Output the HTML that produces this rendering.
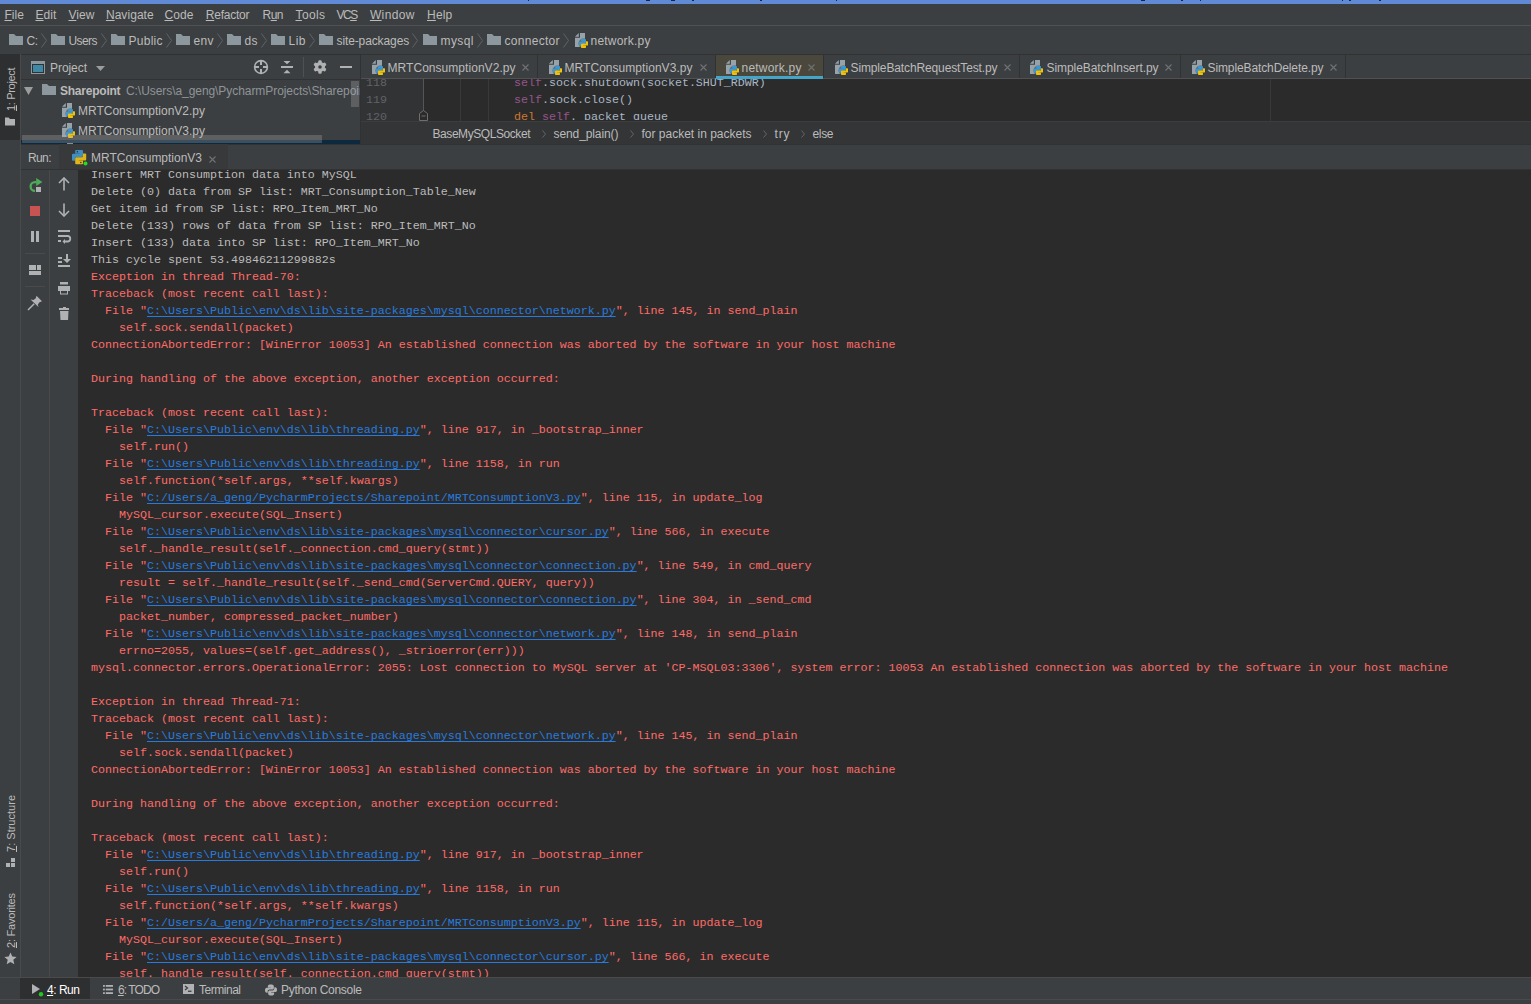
<!DOCTYPE html>
<html><head><meta charset="utf-8"><style>
html,body{margin:0;padding:0;width:1531px;height:1004px;overflow:hidden;background:#3C3F41}
.t{position:absolute;font-family:"Liberation Sans", sans-serif;line-height:16px;white-space:pre}
.t u{text-decoration:underline;text-underline-offset:1px}
.m{position:absolute;font-family:"Liberation Mono", monospace;font-size:11.665px;line-height:17px;white-space:pre}
.con{font-family:"Liberation Mono", monospace;font-size:11.665px;line-height:17px;white-space:pre}
.lk{color:#287BDE;text-decoration:underline;text-underline-offset:2px}
</style></head><body>
<div style="position:absolute;left:0px;top:0px;width:1531px;height:4px;background:#6089D6;"></div>
<div style="position:absolute;left:528px;top:0px;width:1px;height:1px;background:#1A2440;"></div>
<div style="position:absolute;left:646px;top:0px;width:4px;height:1px;background:#1A2440;"></div>
<div style="position:absolute;left:671px;top:0px;width:4px;height:1px;background:#1A2440;"></div>
<div style="position:absolute;left:692px;top:0px;width:2px;height:1px;background:#1A2440;"></div>
<div style="position:absolute;left:760px;top:0px;width:2px;height:1px;background:#1A2440;"></div>
<div style="position:absolute;left:836px;top:0px;width:1px;height:1px;background:#1A2440;"></div>
<div style="position:absolute;left:1141px;top:0px;width:4px;height:1px;background:#1A2440;"></div>
<div style="position:absolute;left:1181px;top:0px;width:2px;height:1px;background:#1A2440;"></div>
<div style="position:absolute;left:1200px;top:0px;width:1px;height:1px;background:#1A2440;"></div>
<div style="position:absolute;left:1342px;top:0px;width:1px;height:1px;background:#1A2440;"></div>
<div style="position:absolute;left:1349px;top:0px;width:2px;height:1px;background:#1A2440;"></div>
<div style="position:absolute;left:1379px;top:0px;width:2px;height:1px;background:#1A2440;"></div>
<div style="position:absolute;left:0px;top:4px;width:1531px;height:21px;background:#3C3F41;"></div>
<div style="position:absolute;left:0px;top:25px;width:1531px;height:1px;background:#515151;"></div>
<div class="t" style="left:4.5px;top:7.0px;font-size:12px;color:#BBBBBB;font-weight:400;letter-spacing:-0.015px;"><u>F</u>ile</div>
<div class="t" style="left:35.5px;top:7.0px;font-size:12px;color:#BBBBBB;font-weight:400;letter-spacing:0.071px;"><u>E</u>dit</div>
<div class="t" style="left:68.5px;top:7.0px;font-size:12px;color:#BBBBBB;font-weight:400;letter-spacing:0.034px;"><u>V</u>iew</div>
<div class="t" style="left:105.9px;top:7.0px;font-size:12px;color:#BBBBBB;font-weight:400;letter-spacing:0.061px;"><u>N</u>avigate</div>
<div class="t" style="left:164.5px;top:7.0px;font-size:12px;color:#BBBBBB;font-weight:400;letter-spacing:0.104px;"><u>C</u>ode</div>
<div class="t" style="left:205.8px;top:7.0px;font-size:12px;color:#BBBBBB;font-weight:400;letter-spacing:-0.237px;"><u>R</u>efactor</div>
<div class="t" style="left:262.5px;top:7.0px;font-size:12px;color:#BBBBBB;font-weight:400;letter-spacing:-0.508px;">R<u>u</u>n</div>
<div class="t" style="left:295.5px;top:7.0px;font-size:12px;color:#BBBBBB;font-weight:400;letter-spacing:0.371px;"><u>T</u>ools</div>
<div class="t" style="left:336.5px;top:7.0px;font-size:12px;color:#BBBBBB;font-weight:400;letter-spacing:-1.494px;">VC<u>S</u></div>
<div class="t" style="left:369.9px;top:7.0px;font-size:12px;color:#BBBBBB;font-weight:400;letter-spacing:0.383px;"><u>W</u>indow</div>
<div class="t" style="left:427.0px;top:7.0px;font-size:12px;color:#BBBBBB;font-weight:400;letter-spacing:0.204px;"><u>H</u>elp</div>
<div style="position:absolute;left:0px;top:26px;width:1531px;height:28px;background:#3C3F41;"></div>
<svg style="position:absolute;left:9px;top:34px" width="14" height="11" viewBox="0 0 14 11">
<path d="M0 0 H5 L7 2 H14 V11 H0 Z" fill="#8C979E"/></svg>
<div class="t" style="left:26.5px;top:33.0px;font-size:12px;color:#BBBBBB;font-weight:400;letter-spacing:-0.5px;">C:</div>
<svg style="position:absolute;left:41px;top:33px" width="6" height="15" viewBox="0 0 6 15">
<path d="M0.5 0.5 L5.5 7.5 L0.5 14.5" fill="none" stroke="#5E6366" stroke-width="1"/></svg>
<svg style="position:absolute;left:51px;top:34px" width="14" height="11" viewBox="0 0 14 11">
<path d="M0 0 H5 L7 2 H14 V11 H0 Z" fill="#8C979E"/></svg>
<div class="t" style="left:68.5px;top:33.0px;font-size:12px;color:#BBBBBB;font-weight:400;letter-spacing:-0.586px;">Users</div>
<svg style="position:absolute;left:101px;top:33px" width="6" height="15" viewBox="0 0 6 15">
<path d="M0.5 0.5 L5.5 7.5 L0.5 14.5" fill="none" stroke="#5E6366" stroke-width="1"/></svg>
<svg style="position:absolute;left:111px;top:34px" width="14" height="11" viewBox="0 0 14 11">
<path d="M0 0 H5 L7 2 H14 V11 H0 Z" fill="#8C979E"/></svg>
<div class="t" style="left:128.5px;top:33.0px;font-size:12px;color:#BBBBBB;font-weight:400;letter-spacing:0.263px;">Public</div>
<svg style="position:absolute;left:166px;top:33px" width="6" height="15" viewBox="0 0 6 15">
<path d="M0.5 0.5 L5.5 7.5 L0.5 14.5" fill="none" stroke="#5E6366" stroke-width="1"/></svg>
<svg style="position:absolute;left:176px;top:34px" width="14" height="11" viewBox="0 0 14 11">
<path d="M0 0 H5 L7 2 H14 V11 H0 Z" fill="#8C979E"/></svg>
<div class="t" style="left:193.5px;top:33.0px;font-size:12px;color:#BBBBBB;font-weight:400;letter-spacing:0.32px;">env</div>
<svg style="position:absolute;left:217px;top:33px" width="6" height="15" viewBox="0 0 6 15">
<path d="M0.5 0.5 L5.5 7.5 L0.5 14.5" fill="none" stroke="#5E6366" stroke-width="1"/></svg>
<svg style="position:absolute;left:227px;top:34px" width="14" height="11" viewBox="0 0 14 11">
<path d="M0 0 H5 L7 2 H14 V11 H0 Z" fill="#8C979E"/></svg>
<div class="t" style="left:244.5px;top:33.0px;font-size:12px;color:#BBBBBB;font-weight:400;letter-spacing:0.312px;">ds</div>
<svg style="position:absolute;left:261px;top:33px" width="6" height="15" viewBox="0 0 6 15">
<path d="M0.5 0.5 L5.5 7.5 L0.5 14.5" fill="none" stroke="#5E6366" stroke-width="1"/></svg>
<svg style="position:absolute;left:271px;top:34px" width="14" height="11" viewBox="0 0 14 11">
<path d="M0 0 H5 L7 2 H14 V11 H0 Z" fill="#8C979E"/></svg>
<div class="t" style="left:288.5px;top:33.0px;font-size:12px;color:#BBBBBB;font-weight:400;letter-spacing:0.492px;">Lib</div>
<svg style="position:absolute;left:309px;top:33px" width="6" height="15" viewBox="0 0 6 15">
<path d="M0.5 0.5 L5.5 7.5 L0.5 14.5" fill="none" stroke="#5E6366" stroke-width="1"/></svg>
<svg style="position:absolute;left:319px;top:34px" width="14" height="11" viewBox="0 0 14 11">
<path d="M0 0 H5 L7 2 H14 V11 H0 Z" fill="#8C979E"/></svg>
<div class="t" style="left:336.5px;top:33.0px;font-size:12px;color:#BBBBBB;font-weight:400;letter-spacing:-0.112px;">site-packages</div>
<svg style="position:absolute;left:412px;top:33px" width="6" height="15" viewBox="0 0 6 15">
<path d="M0.5 0.5 L5.5 7.5 L0.5 14.5" fill="none" stroke="#5E6366" stroke-width="1"/></svg>
<svg style="position:absolute;left:423px;top:34px" width="14" height="11" viewBox="0 0 14 11">
<path d="M0 0 H5 L7 2 H14 V11 H0 Z" fill="#8C979E"/></svg>
<div class="t" style="left:440.5px;top:33.0px;font-size:12px;color:#BBBBBB;font-weight:400;letter-spacing:0.414px;">mysql</div>
<svg style="position:absolute;left:477px;top:33px" width="6" height="15" viewBox="0 0 6 15">
<path d="M0.5 0.5 L5.5 7.5 L0.5 14.5" fill="none" stroke="#5E6366" stroke-width="1"/></svg>
<svg style="position:absolute;left:487px;top:34px" width="14" height="11" viewBox="0 0 14 11">
<path d="M0 0 H5 L7 2 H14 V11 H0 Z" fill="#8C979E"/></svg>
<div class="t" style="left:504.5px;top:33.0px;font-size:12px;color:#BBBBBB;font-weight:400;letter-spacing:0.287px;">connector</div>
<svg style="position:absolute;left:563px;top:33px" width="6" height="15" viewBox="0 0 6 15">
<path d="M0.5 0.5 L5.5 7.5 L0.5 14.5" fill="none" stroke="#5E6366" stroke-width="1"/></svg>
<svg style="position:absolute;left:575px;top:33px" width="14" height="16" viewBox="0 0 14 16">
<path d="M0 3.7 L3.8 0 V3.7 Z" fill="#97A3AB"/>
<path d="M5 0 H10 V14 H0 V4.8 H5 Z" fill="#97A3AB"/>
<circle cx="8.5" cy="10.5" r="5" fill="#333537" opacity="0.55"/>
<g transform="translate(4 6) scale(0.6338028169014085)"><path d="M4 0 H10 Q11 0 11 1 V6 Q11 7 10 7 H4.2 Q3.2 7 3.2 8 V10.7 H1 Q0 10.7 0 9.7 V4.8 Q0 3.8 1 3.8 H7.5 V3.4 H3.2 V1 Q3.2 0 4 0 Z" fill="#3D97D3"/><g transform="rotate(180 7.1 7.1)"><path d="M4 0 H10 Q11 0 11 1 V6 Q11 7 10 7 H4.2 Q3.2 7 3.2 8 V10.7 H1 Q0 10.7 0 9.7 V4.8 Q0 3.8 1 3.8 H7.5 V3.4 H3.2 V1 Q3.2 0 4 0 Z" fill="#F0C20A"/></g></g>
</svg>
<div class="t" style="left:590.5px;top:33.0px;font-size:12px;color:#BBBBBB;font-weight:400;letter-spacing:0.219px;">network.py</div>
<div style="position:absolute;left:0px;top:54px;width:20px;height:923px;background:#3C3F41;"></div>
<div style="position:absolute;left:0px;top:54px;width:20px;height:86px;background:#2D2F30;"></div>
<div style="position:absolute;left:20px;top:54px;width:1px;height:923px;background:#4A4A4A;"></div>
<div style="position:absolute;left:21px;top:54px;width:339px;height:90px;background:#3C3F41;"></div>
<div style="position:absolute;left:21px;top:79px;width:339px;height:1px;background:#323232;"></div>
<div style="position:absolute;left:21px;top:54px;width:1510px;height:1px;background:#2F3133;"></div>
<svg style="position:absolute;left:31px;top:61px" width="14" height="13" viewBox="0 0 14 13"><rect x="0" y="0" width="14" height="13" fill="#8C979E"/><rect x="1" y="3" width="12" height="9" fill="#2F3133"/><rect x="2" y="4" width="10" height="7" fill="#3E89A6"/></svg>
<div class="t" style="left:50px;top:60.0px;font-size:12px;color:#BBBBBB;font-weight:400;letter-spacing:-0.06px;">Project</div>
<svg style="position:absolute;left:96px;top:66px" width="9" height="5" viewBox="0 0 9 5"><path d="M0 0 H9 L4.5 5 Z" fill="#9A9C9E"/></svg>
<svg style="position:absolute;left:253px;top:59px" width="16" height="16" viewBox="0 0 16 16"><circle cx="8" cy="8" r="6.4" fill="none" stroke="#AFB1B3" stroke-width="1.6"/><path d="M8 1.5 V6 M8 10 V14.5 M1.5 8 H6 M10 8 H14.5" stroke="#AFB1B3" stroke-width="2"/></svg>
<svg style="position:absolute;left:281px;top:60px" width="12" height="14" viewBox="0 0 12 14"><path d="M0 7 H12" stroke="#AFB1B3" stroke-width="2"/><path d="M2.5 1 H9.5 L6 4.2 Z M2.5 13.2 H9.5 L6 9.8 Z" fill="#AFB1B3"/></svg>
<div style="position:absolute;left:303px;top:57px;width:1px;height:20px;background:#4F5052;"></div>
<svg style="position:absolute;left:313px;top:60px" width="14" height="14" viewBox="0 0 14 14"><g fill="#AFB1B3"><circle cx="7" cy="7" r="5"/><rect x="5.3" y="0.3" width="3.4" height="13.4" rx="1.2"/><rect x="5.3" y="0.3" width="3.4" height="13.4" rx="1.2" transform="rotate(60 7 7)"/><rect x="5.3" y="0.3" width="3.4" height="13.4" rx="1.2" transform="rotate(-60 7 7)"/></g><circle cx="7" cy="7" r="1.8" fill="#3C3F41"/></svg>
<div style="position:absolute;left:340px;top:66px;width:12px;height:2px;background:#AFB1B3;"></div>
<svg style="position:absolute;left:24px;top:87px" width="9" height="8" viewBox="0 0 9 8"><path d="M0 0 H9 L4.5 8 Z" fill="#9A9C9E"/></svg>
<svg style="position:absolute;left:42px;top:84px" width="14" height="11" viewBox="0 0 14 11">
<path d="M0 0 H5 L7 2 H14 V11 H0 Z" fill="#8C979E"/></svg>
<div class="t" style="left:60px;top:83.0px;font-size:12px;color:#BBBBBB;font-weight:700;letter-spacing:-0.23px;">Sharepoint</div>
<div class="t" style="left:126px;top:83.0px;font-size:12px;color:#8F9498;font-weight:400;letter-spacing:-0.063px;">C:\Users\a_geng\PycharmProjects\Sharepoint</div>
<svg style="position:absolute;left:62px;top:103px" width="14" height="16" viewBox="0 0 14 16">
<path d="M0 3.7 L3.8 0 V3.7 Z" fill="#97A3AB"/>
<path d="M5 0 H10 V14 H0 V4.8 H5 Z" fill="#97A3AB"/>
<circle cx="8.5" cy="10.5" r="5" fill="#333537" opacity="0.55"/>
<g transform="translate(4 6) scale(0.6338028169014085)"><path d="M4 0 H10 Q11 0 11 1 V6 Q11 7 10 7 H4.2 Q3.2 7 3.2 8 V10.7 H1 Q0 10.7 0 9.7 V4.8 Q0 3.8 1 3.8 H7.5 V3.4 H3.2 V1 Q3.2 0 4 0 Z" fill="#3D97D3"/><g transform="rotate(180 7.1 7.1)"><path d="M4 0 H10 Q11 0 11 1 V6 Q11 7 10 7 H4.2 Q3.2 7 3.2 8 V10.7 H1 Q0 10.7 0 9.7 V4.8 Q0 3.8 1 3.8 H7.5 V3.4 H3.2 V1 Q3.2 0 4 0 Z" fill="#F0C20A"/></g></g>
</svg>
<div class="t" style="left:78px;top:103.0px;font-size:12px;color:#BBBBBB;font-weight:400;letter-spacing:-0.01px;">MRTConsumptionV2.py</div>
<svg style="position:absolute;left:62px;top:123px" width="14" height="16" viewBox="0 0 14 16">
<path d="M0 3.7 L3.8 0 V3.7 Z" fill="#97A3AB"/>
<path d="M5 0 H10 V14 H0 V4.8 H5 Z" fill="#97A3AB"/>
<circle cx="8.5" cy="10.5" r="5" fill="#333537" opacity="0.55"/>
<g transform="translate(4 6) scale(0.6338028169014085)"><path d="M4 0 H10 Q11 0 11 1 V6 Q11 7 10 7 H4.2 Q3.2 7 3.2 8 V10.7 H1 Q0 10.7 0 9.7 V4.8 Q0 3.8 1 3.8 H7.5 V3.4 H3.2 V1 Q3.2 0 4 0 Z" fill="#3D97D3"/><g transform="rotate(180 7.1 7.1)"><path d="M4 0 H10 Q11 0 11 1 V6 Q11 7 10 7 H4.2 Q3.2 7 3.2 8 V10.7 H1 Q0 10.7 0 9.7 V4.8 Q0 3.8 1 3.8 H7.5 V3.4 H3.2 V1 Q3.2 0 4 0 Z" fill="#F0C20A"/></g></g>
</svg>
<div class="t" style="left:78px;top:123.0px;font-size:12px;color:#BBBBBB;font-weight:400;letter-spacing:-0.01px;">MRTConsumptionV3.py</div>
<div style="position:absolute;left:21px;top:140px;width:339px;height:4px;background:#0D293E;"></div>
<div style="position:absolute;left:67px;top:143px;width:6px;height:1px;background:#8A8F93;"></div>
<div style="position:absolute;left:22px;top:135px;width:300px;height:8px;background:rgba(180,180,180,0.28);"></div>
<div style="position:absolute;left:351px;top:81px;width:8px;height:26px;background:rgba(180,180,180,0.28);"></div>
<div style="position:absolute;left:360px;top:54px;width:1171px;height:25px;background:#3C3F41;"></div>
<div style="position:absolute;left:360px;top:54px;width:1171px;height:1px;background:#323232;"></div>
<div style="position:absolute;left:360px;top:78px;width:1171px;height:1px;background:#515151;"></div>
<div style="position:absolute;left:715px;top:55px;width:108px;height:23px;background:#4A473D;"></div>
<div style="position:absolute;left:715px;top:76px;width:108px;height:3px;background:#45A5C9;"></div>
<svg style="position:absolute;left:372px;top:60px" width="14" height="16" viewBox="0 0 14 16">
<path d="M0 3.7 L3.8 0 V3.7 Z" fill="#97A3AB"/>
<path d="M5 0 H10 V14 H0 V4.8 H5 Z" fill="#97A3AB"/>
<circle cx="8.5" cy="10.5" r="5" fill="#333537" opacity="0.55"/>
<g transform="translate(4 6) scale(0.6338028169014085)"><path d="M4 0 H10 Q11 0 11 1 V6 Q11 7 10 7 H4.2 Q3.2 7 3.2 8 V10.7 H1 Q0 10.7 0 9.7 V4.8 Q0 3.8 1 3.8 H7.5 V3.4 H3.2 V1 Q3.2 0 4 0 Z" fill="#3D97D3"/><g transform="rotate(180 7.1 7.1)"><path d="M4 0 H10 Q11 0 11 1 V6 Q11 7 10 7 H4.2 Q3.2 7 3.2 8 V10.7 H1 Q0 10.7 0 9.7 V4.8 Q0 3.8 1 3.8 H7.5 V3.4 H3.2 V1 Q3.2 0 4 0 Z" fill="#F0C20A"/></g></g>
</svg>
<div class="t" style="left:387.5px;top:60.0px;font-size:12px;color:#BBBBBB;font-weight:400;letter-spacing:0.046px;">MRTConsumptionV2.py</div>
<svg style="position:absolute;left:522px;top:64px" width="7" height="7" viewBox="0 0 7 7">
<path d="M0.5 0.5 L6.5 6.5 M6.5 0.5 L0.5 6.5" stroke="#6E7072" stroke-width="1.2"/></svg>
<div style="position:absolute;left:537px;top:55px;width:1px;height:23px;background:#323232;"></div>
<svg style="position:absolute;left:549px;top:60px" width="14" height="16" viewBox="0 0 14 16">
<path d="M0 3.7 L3.8 0 V3.7 Z" fill="#97A3AB"/>
<path d="M5 0 H10 V14 H0 V4.8 H5 Z" fill="#97A3AB"/>
<circle cx="8.5" cy="10.5" r="5" fill="#333537" opacity="0.55"/>
<g transform="translate(4 6) scale(0.6338028169014085)"><path d="M4 0 H10 Q11 0 11 1 V6 Q11 7 10 7 H4.2 Q3.2 7 3.2 8 V10.7 H1 Q0 10.7 0 9.7 V4.8 Q0 3.8 1 3.8 H7.5 V3.4 H3.2 V1 Q3.2 0 4 0 Z" fill="#3D97D3"/><g transform="rotate(180 7.1 7.1)"><path d="M4 0 H10 Q11 0 11 1 V6 Q11 7 10 7 H4.2 Q3.2 7 3.2 8 V10.7 H1 Q0 10.7 0 9.7 V4.8 Q0 3.8 1 3.8 H7.5 V3.4 H3.2 V1 Q3.2 0 4 0 Z" fill="#F0C20A"/></g></g>
</svg>
<div class="t" style="left:564.5px;top:60.0px;font-size:12px;color:#BBBBBB;font-weight:400;letter-spacing:0.046px;">MRTConsumptionV3.py</div>
<svg style="position:absolute;left:700px;top:64px" width="7" height="7" viewBox="0 0 7 7">
<path d="M0.5 0.5 L6.5 6.5 M6.5 0.5 L0.5 6.5" stroke="#6E7072" stroke-width="1.2"/></svg>
<div style="position:absolute;left:715px;top:55px;width:1px;height:23px;background:#323232;"></div>
<svg style="position:absolute;left:726px;top:60px" width="14" height="16" viewBox="0 0 14 16">
<path d="M0 3.7 L3.8 0 V3.7 Z" fill="#97A3AB"/>
<path d="M5 0 H10 V14 H0 V4.8 H5 Z" fill="#97A3AB"/>
<circle cx="8.5" cy="10.5" r="5" fill="#333537" opacity="0.55"/>
<g transform="translate(4 6) scale(0.6338028169014085)"><path d="M4 0 H10 Q11 0 11 1 V6 Q11 7 10 7 H4.2 Q3.2 7 3.2 8 V10.7 H1 Q0 10.7 0 9.7 V4.8 Q0 3.8 1 3.8 H7.5 V3.4 H3.2 V1 Q3.2 0 4 0 Z" fill="#3D97D3"/><g transform="rotate(180 7.1 7.1)"><path d="M4 0 H10 Q11 0 11 1 V6 Q11 7 10 7 H4.2 Q3.2 7 3.2 8 V10.7 H1 Q0 10.7 0 9.7 V4.8 Q0 3.8 1 3.8 H7.5 V3.4 H3.2 V1 Q3.2 0 4 0 Z" fill="#F0C20A"/></g></g>
</svg>
<div class="t" style="left:741.5px;top:60.0px;font-size:12px;color:#BBBBBB;font-weight:400;letter-spacing:0.219px;">network.py</div>
<svg style="position:absolute;left:808px;top:64px" width="7" height="7" viewBox="0 0 7 7">
<path d="M0.5 0.5 L6.5 6.5 M6.5 0.5 L0.5 6.5" stroke="#6E7072" stroke-width="1.2"/></svg>
<div style="position:absolute;left:823px;top:55px;width:1px;height:23px;background:#323232;"></div>
<svg style="position:absolute;left:835px;top:60px" width="14" height="16" viewBox="0 0 14 16">
<path d="M0 3.7 L3.8 0 V3.7 Z" fill="#97A3AB"/>
<path d="M5 0 H10 V14 H0 V4.8 H5 Z" fill="#97A3AB"/>
<circle cx="8.5" cy="10.5" r="5" fill="#333537" opacity="0.55"/>
<g transform="translate(4 6) scale(0.6338028169014085)"><path d="M4 0 H10 Q11 0 11 1 V6 Q11 7 10 7 H4.2 Q3.2 7 3.2 8 V10.7 H1 Q0 10.7 0 9.7 V4.8 Q0 3.8 1 3.8 H7.5 V3.4 H3.2 V1 Q3.2 0 4 0 Z" fill="#3D97D3"/><g transform="rotate(180 7.1 7.1)"><path d="M4 0 H10 Q11 0 11 1 V6 Q11 7 10 7 H4.2 Q3.2 7 3.2 8 V10.7 H1 Q0 10.7 0 9.7 V4.8 Q0 3.8 1 3.8 H7.5 V3.4 H3.2 V1 Q3.2 0 4 0 Z" fill="#F0C20A"/></g></g>
</svg>
<div class="t" style="left:850.5px;top:60.0px;font-size:12px;color:#BBBBBB;font-weight:400;letter-spacing:-0.128px;">SimpleBatchRequestTest.py</div>
<svg style="position:absolute;left:1004px;top:64px" width="7" height="7" viewBox="0 0 7 7">
<path d="M0.5 0.5 L6.5 6.5 M6.5 0.5 L0.5 6.5" stroke="#6E7072" stroke-width="1.2"/></svg>
<div style="position:absolute;left:1019px;top:55px;width:1px;height:23px;background:#323232;"></div>
<svg style="position:absolute;left:1030px;top:60px" width="14" height="16" viewBox="0 0 14 16">
<path d="M0 3.7 L3.8 0 V3.7 Z" fill="#97A3AB"/>
<path d="M5 0 H10 V14 H0 V4.8 H5 Z" fill="#97A3AB"/>
<circle cx="8.5" cy="10.5" r="5" fill="#333537" opacity="0.55"/>
<g transform="translate(4 6) scale(0.6338028169014085)"><path d="M4 0 H10 Q11 0 11 1 V6 Q11 7 10 7 H4.2 Q3.2 7 3.2 8 V10.7 H1 Q0 10.7 0 9.7 V4.8 Q0 3.8 1 3.8 H7.5 V3.4 H3.2 V1 Q3.2 0 4 0 Z" fill="#3D97D3"/><g transform="rotate(180 7.1 7.1)"><path d="M4 0 H10 Q11 0 11 1 V6 Q11 7 10 7 H4.2 Q3.2 7 3.2 8 V10.7 H1 Q0 10.7 0 9.7 V4.8 Q0 3.8 1 3.8 H7.5 V3.4 H3.2 V1 Q3.2 0 4 0 Z" fill="#F0C20A"/></g></g>
</svg>
<div class="t" style="left:1046.5px;top:60.0px;font-size:12px;color:#BBBBBB;font-weight:400;letter-spacing:-0.073px;">SimpleBatchInsert.py</div>
<svg style="position:absolute;left:1165px;top:64px" width="7" height="7" viewBox="0 0 7 7">
<path d="M0.5 0.5 L6.5 6.5 M6.5 0.5 L0.5 6.5" stroke="#6E7072" stroke-width="1.2"/></svg>
<div style="position:absolute;left:1180px;top:55px;width:1px;height:23px;background:#323232;"></div>
<svg style="position:absolute;left:1192px;top:60px" width="14" height="16" viewBox="0 0 14 16">
<path d="M0 3.7 L3.8 0 V3.7 Z" fill="#97A3AB"/>
<path d="M5 0 H10 V14 H0 V4.8 H5 Z" fill="#97A3AB"/>
<circle cx="8.5" cy="10.5" r="5" fill="#333537" opacity="0.55"/>
<g transform="translate(4 6) scale(0.6338028169014085)"><path d="M4 0 H10 Q11 0 11 1 V6 Q11 7 10 7 H4.2 Q3.2 7 3.2 8 V10.7 H1 Q0 10.7 0 9.7 V4.8 Q0 3.8 1 3.8 H7.5 V3.4 H3.2 V1 Q3.2 0 4 0 Z" fill="#3D97D3"/><g transform="rotate(180 7.1 7.1)"><path d="M4 0 H10 Q11 0 11 1 V6 Q11 7 10 7 H4.2 Q3.2 7 3.2 8 V10.7 H1 Q0 10.7 0 9.7 V4.8 Q0 3.8 1 3.8 H7.5 V3.4 H3.2 V1 Q3.2 0 4 0 Z" fill="#F0C20A"/></g></g>
</svg>
<div class="t" style="left:1207.5px;top:60.0px;font-size:12px;color:#BBBBBB;font-weight:400;letter-spacing:-0.109px;">SimpleBatchDelete.py</div>
<svg style="position:absolute;left:1330px;top:64px" width="7" height="7" viewBox="0 0 7 7">
<path d="M0.5 0.5 L6.5 6.5 M6.5 0.5 L0.5 6.5" stroke="#6E7072" stroke-width="1.2"/></svg>
<div style="position:absolute;left:1345px;top:55px;width:1px;height:23px;background:#323232;"></div>
<div style="position:absolute;left:360px;top:79px;width:63px;height:42px;background:#313335;"></div>
<div style="position:absolute;left:423px;top:79px;width:1108px;height:42px;background:#2B2B2B;"></div>
<div style="position:absolute;left:460px;top:79px;width:1px;height:42px;background:#393939;"></div>
<div style="position:absolute;left:488px;top:79px;width:1px;height:42px;background:#393939;"></div>
<div style="position:absolute;left:1270px;top:79px;width:1px;height:42px;background:#393939;"></div>
<div style="position:absolute;left:423px;top:79px;width:1px;height:32px;background:#555555;"></div>
<svg style="position:absolute;left:419px;top:110px" width="9" height="11" viewBox="0 0 9 11"><path d="M4.5 0.5 L8.5 3.5 V10.5 H0.5 V3.5 Z" fill="#2B2B2B" stroke="#6E6E6E"/><path d="M2.5 6 H6.5" stroke="#6E6E6E"/></svg>
<div style="position:absolute;left:360px;top:79px;width:1171px;height:41px;overflow:hidden">
<div class="m" style="left:6px;top:-3.5999999999999996px;color:#606366">118</div>
<div class="m" style="left:154px;top:-3.5999999999999996px;color:#A9B7C6"><span style="color:#94558D">self</span>.sock.shutdown(socket.SHUT_RDWR)</div>
<div class="m" style="left:6px;top:13.4px;color:#606366">119</div>
<div class="m" style="left:154px;top:13.4px;color:#A9B7C6"><span style="color:#94558D">self</span>.sock.close()</div>
<div class="m" style="left:6px;top:30.4px;color:#606366">120</div>
<div class="m" style="left:154px;top:30.4px;color:#A9B7C6"><span style="color:#CC7832">del </span><span style="color:#94558D">self</span>._packet_queue</div>
</div>
<div style="position:absolute;left:360px;top:121px;width:1171px;height:23px;background:#333537;"></div>
<div style="position:absolute;left:360px;top:121px;width:1171px;height:1px;background:#3B3D3F;"></div>
<div class="t" style="left:432.5px;top:126.0px;font-size:12px;color:#BBBBBB;font-weight:400;letter-spacing:-0.432px;">BaseMySQLSocket</div>
<svg style="position:absolute;left:542px;top:130px" width="4" height="8" viewBox="0 0 4 8"><path d="M0.5 0.5 L3.5 4 L0.5 7.5" fill="none" stroke="#626568" stroke-width="1"/></svg>
<div class="t" style="left:553.5px;top:126.0px;font-size:12px;color:#BBBBBB;font-weight:400;letter-spacing:-0.095px;">send_plain()</div>
<svg style="position:absolute;left:630px;top:130px" width="4" height="8" viewBox="0 0 4 8"><path d="M0.5 0.5 L3.5 4 L0.5 7.5" fill="none" stroke="#626568" stroke-width="1"/></svg>
<div class="t" style="left:641.5px;top:126.0px;font-size:12px;color:#BBBBBB;font-weight:400;letter-spacing:-0.003px;">for packet in packets</div>
<svg style="position:absolute;left:763px;top:130px" width="4" height="8" viewBox="0 0 4 8"><path d="M0.5 0.5 L3.5 4 L0.5 7.5" fill="none" stroke="#626568" stroke-width="1"/></svg>
<div class="t" style="left:774.5px;top:126.0px;font-size:12px;color:#BBBBBB;font-weight:400;letter-spacing:0.828px;">try</div>
<svg style="position:absolute;left:801px;top:130px" width="4" height="8" viewBox="0 0 4 8"><path d="M0.5 0.5 L3.5 4 L0.5 7.5" fill="none" stroke="#626568" stroke-width="1"/></svg>
<div class="t" style="left:812.5px;top:126.0px;font-size:12px;color:#BBBBBB;font-weight:400;letter-spacing:-0.339px;">else</div>
<div style="position:absolute;left:360px;top:54px;width:1px;height:90px;background:#2F3133;"></div>
<div style="position:absolute;left:21px;top:144px;width:1510px;height:25px;background:#3C3F41;"></div>
<div style="position:absolute;left:21px;top:144px;width:1510px;height:1px;background:#303234;"></div>
<div style="position:absolute;left:59px;top:144px;width:169px;height:25px;background:#37393B;"></div>
<div style="position:absolute;left:21px;top:169px;width:1510px;height:1px;background:#323232;"></div>
<div class="t" style="left:28px;top:150.0px;font-size:12px;color:#BBBBBB;font-weight:400;letter-spacing:-0.62px;">Run:</div>
<svg style="position:absolute;left:72px;top:150px" width="17" height="17" viewBox="0 0 17 17">
<path d="M4 0 H10 Q11 0 11 1 V6 Q11 7 10 7 H4.2 Q3.2 7 3.2 8 V10.7 H1 Q0 10.7 0 9.7 V4.8 Q0 3.8 1 3.8 H7.5 V3.4 H3.2 V1 Q3.2 0 4 0 Z" fill="#3F8FC2"/><circle cx="5.4" cy="1.7" r="0.75" fill="#2B2B2B"/>
<g transform="rotate(180 7.1 7.1)"><path d="M4 0 H10 Q11 0 11 1 V6 Q11 7 10 7 H4.2 Q3.2 7 3.2 8 V10.7 H1 Q0 10.7 0 9.7 V4.8 Q0 3.8 1 3.8 H7.5 V3.4 H3.2 V1 Q3.2 0 4 0 Z" fill="#E2B516"/><circle cx="5.4" cy="1.7" r="0.75" fill="#2B2B2B"/></g>
<circle cx="13.5" cy="13.6" r="2" fill="#1FE01F"/></svg>
<div class="t" style="left:91px;top:150.0px;font-size:12px;color:#BBBBBB;font-weight:400;letter-spacing:-0.011px;">MRTConsumptionV3</div>
<svg style="position:absolute;left:208.5px;top:156px" width="7" height="7" viewBox="0 0 7 7">
<path d="M0.5 0.5 L6.5 6.5 M6.5 0.5 L0.5 6.5" stroke="#6E7072" stroke-width="1.2"/></svg>
<div style="position:absolute;left:21px;top:170px;width:28px;height:807px;background:#3C3F41;"></div>
<div style="position:absolute;left:49px;top:170px;width:1px;height:807px;background:#4A4A4A;"></div>
<div style="position:absolute;left:50px;top:170px;width:28px;height:807px;background:#3C3F41;"></div>
<div style="position:absolute;left:78px;top:170px;width:1453px;height:807px;background:#2B2B2B;"></div>
<svg style="position:absolute;left:28px;top:177px" width="16" height="16" viewBox="0 0 16 16">
<path d="M8.5 5.1 H7 A4.4 4.4 0 0 0 7 13.9" fill="none" stroke="#4DAA57" stroke-width="2.3"/>
<path d="M8.2 0.9 L14.4 4.9 L8.2 8.9 Z" fill="#4DAA57"/>
<rect x="8" y="10" width="5" height="5" fill="#AFB1B3"/></svg>
<div style="position:absolute;left:30px;top:206px;width:10px;height:10px;background:#C75450;"></div>
<div style="position:absolute;left:31px;top:231px;width:3px;height:11px;background:#AFB1B3;"></div>
<div style="position:absolute;left:36px;top:231px;width:3px;height:11px;background:#AFB1B3;"></div>
<div style="position:absolute;left:25px;top:253px;width:20px;height:1px;background:#4A4A4A;"></div>
<svg style="position:absolute;left:29px;top:265px" width="13" height="11" viewBox="0 0 13 11"><g fill="#AFB1B3"><rect x="0" y="0" width="7" height="5"/><rect x="8" y="0" width="4" height="5"/><rect x="0" y="6" width="12" height="4"/></g></svg>
<div style="position:absolute;left:25px;top:286px;width:20px;height:1px;background:#4A4A4A;"></div>
<svg style="position:absolute;left:27px;top:295px" width="16" height="16" viewBox="0 0 16 16"><path d="M9.5 0.8 L15 6.3 L12.5 7.2 L10.8 9.5 L11.5 12 L3.5 4.5 L6.5 5 L8.8 3.3 Z" fill="#AFB1B3"/><path d="M7.2 8.8 L1 15" stroke="#AFB1B3" stroke-width="1.5"/></svg>
<svg style="position:absolute;left:58px;top:177px" width="12" height="14" viewBox="0 0 12 14"><path d="M6 1.5 V13.5" stroke="#AFB1B3" stroke-width="1.6"/><path d="M1 6 L6 1 L11 6" fill="none" stroke="#AFB1B3" stroke-width="1.6"/></svg>
<svg style="position:absolute;left:58px;top:203px" width="12" height="14" viewBox="0 0 12 14"><path d="M6 0.5 V12.5" stroke="#AFB1B3" stroke-width="1.6"/><path d="M1 8 L6 13 L11 8" fill="none" stroke="#AFB1B3" stroke-width="1.6"/></svg>
<svg style="position:absolute;left:57px;top:229px" width="15" height="16" viewBox="0 0 15 16"><g fill="#AFB1B3"><rect x="1" y="1" width="12" height="2"/><rect x="1" y="6" width="9" height="2"/><rect x="1" y="11" width="3" height="2"/></g><path d="M10 7 H11 A2.8 2.8 0 0 1 11 12.5 H7" fill="none" stroke="#AFB1B3" stroke-width="1.8"/><path d="M8 10 L5.5 12.5 L8 15 Z" fill="#AFB1B3"/></svg>
<svg style="position:absolute;left:58px;top:254px" width="13" height="14" viewBox="0 0 13 14"><g fill="#AFB1B3"><rect x="0" y="3" width="4" height="2"/><rect x="0" y="7" width="4" height="2"/><rect x="0" y="11" width="12" height="2"/><rect x="8" y="0" width="2" height="6"/><path d="M5 5 H13 L9 9 Z"/></g></svg>
<svg style="position:absolute;left:58px;top:282px" width="13" height="13" viewBox="0 0 13 13"><g fill="#AFB1B3"><rect x="2" y="0" width="8" height="2.5"/><rect x="0" y="4" width="12" height="5"/></g><rect x="2.5" y="8.5" width="7" height="3.5" fill="#3C3F41" stroke="#AFB1B3" stroke-width="1"/></svg>
<svg style="position:absolute;left:59px;top:307px" width="11" height="14" viewBox="0 0 11 14"><g fill="#AFB1B3"><rect x="0" y="1" width="10" height="2"/><rect x="4" y="0" width="3" height="1"/><path d="M1 4 H9.5 L9 13 H1.5 Z"/></g></svg>
<div style="position:absolute;left:78px;top:170px;width:1453px;height:807px;overflow:hidden"><div class="con" style="position:absolute;left:13px;top:-2.5999999999999996px"><div style="color:#BBBBBB">Insert MRT Consumption data into MySQL</div><div style="color:#BBBBBB">Delete (0) data from SP list: MRT_Consumption_Table_New</div><div style="color:#BBBBBB">Get item id from SP list: RPO_Item_MRT_No</div><div style="color:#BBBBBB">Delete (133) rows of data from SP list: RPO_Item_MRT_No</div><div style="color:#BBBBBB">Insert (133) data into SP list: RPO_Item_MRT_No</div><div style="color:#BBBBBB">This cycle spent 53.49846211299882s</div><div style="color:#FF6B68">Exception in thread Thread-70:</div><div style="color:#FF6B68">Traceback (most recent call last):</div><div style="color:#FF6B68">  File &quot;<span class="lk">C:\Users\Public\env\ds\lib\site-packages\mysql\connector\network.py</span>&quot;, line 145, in send_plain</div><div style="color:#FF6B68">    self.sock.sendall(packet)</div><div style="color:#FF6B68">ConnectionAbortedError: [WinError 10053] An established connection was aborted by the software in your host machine</div><div style="color:#FF6B68">&nbsp;</div><div style="color:#FF6B68">During handling of the above exception, another exception occurred:</div><div style="color:#FF6B68">&nbsp;</div><div style="color:#FF6B68">Traceback (most recent call last):</div><div style="color:#FF6B68">  File &quot;<span class="lk">C:\Users\Public\env\ds\lib\threading.py</span>&quot;, line 917, in _bootstrap_inner</div><div style="color:#FF6B68">    self.run()</div><div style="color:#FF6B68">  File &quot;<span class="lk">C:\Users\Public\env\ds\lib\threading.py</span>&quot;, line 1158, in run</div><div style="color:#FF6B68">    self.function(*self.args, **self.kwargs)</div><div style="color:#FF6B68">  File &quot;<span class="lk">C:/Users/a_geng/PycharmProjects/Sharepoint/MRTConsumptionV3.py</span>&quot;, line 115, in update_log</div><div style="color:#FF6B68">    MySQL_cursor.execute(SQL_Insert)</div><div style="color:#FF6B68">  File &quot;<span class="lk">C:\Users\Public\env\ds\lib\site-packages\mysql\connector\cursor.py</span>&quot;, line 566, in execute</div><div style="color:#FF6B68">    self._handle_result(self._connection.cmd_query(stmt))</div><div style="color:#FF6B68">  File &quot;<span class="lk">C:\Users\Public\env\ds\lib\site-packages\mysql\connector\connection.py</span>&quot;, line 549, in cmd_query</div><div style="color:#FF6B68">    result = self._handle_result(self._send_cmd(ServerCmd.QUERY, query))</div><div style="color:#FF6B68">  File &quot;<span class="lk">C:\Users\Public\env\ds\lib\site-packages\mysql\connector\connection.py</span>&quot;, line 304, in _send_cmd</div><div style="color:#FF6B68">    packet_number, compressed_packet_number)</div><div style="color:#FF6B68">  File &quot;<span class="lk">C:\Users\Public\env\ds\lib\site-packages\mysql\connector\network.py</span>&quot;, line 148, in send_plain</div><div style="color:#FF6B68">    errno=2055, values=(self.get_address(), _strioerror(err)))</div><div style="color:#FF6B68">mysql.connector.errors.OperationalError: 2055: Lost connection to MySQL server at &#x27;CP-MSQL03:3306&#x27;, system error: 10053 An established connection was aborted by the software in your host machine</div><div style="color:#FF6B68">&nbsp;</div><div style="color:#FF6B68">Exception in thread Thread-71:</div><div style="color:#FF6B68">Traceback (most recent call last):</div><div style="color:#FF6B68">  File &quot;<span class="lk">C:\Users\Public\env\ds\lib\site-packages\mysql\connector\network.py</span>&quot;, line 145, in send_plain</div><div style="color:#FF6B68">    self.sock.sendall(packet)</div><div style="color:#FF6B68">ConnectionAbortedError: [WinError 10053] An established connection was aborted by the software in your host machine</div><div style="color:#FF6B68">&nbsp;</div><div style="color:#FF6B68">During handling of the above exception, another exception occurred:</div><div style="color:#FF6B68">&nbsp;</div><div style="color:#FF6B68">Traceback (most recent call last):</div><div style="color:#FF6B68">  File &quot;<span class="lk">C:\Users\Public\env\ds\lib\threading.py</span>&quot;, line 917, in _bootstrap_inner</div><div style="color:#FF6B68">    self.run()</div><div style="color:#FF6B68">  File &quot;<span class="lk">C:\Users\Public\env\ds\lib\threading.py</span>&quot;, line 1158, in run</div><div style="color:#FF6B68">    self.function(*self.args, **self.kwargs)</div><div style="color:#FF6B68">  File &quot;<span class="lk">C:/Users/a_geng/PycharmProjects/Sharepoint/MRTConsumptionV3.py</span>&quot;, line 115, in update_log</div><div style="color:#FF6B68">    MySQL_cursor.execute(SQL_Insert)</div><div style="color:#FF6B68">  File &quot;<span class="lk">C:\Users\Public\env\ds\lib\site-packages\mysql\connector\cursor.py</span>&quot;, line 566, in execute</div><div style="color:#FF6B68">    self._handle_result(self._connection.cmd_query(stmt))</div></div></div>
<div class="t" style="left:3px;top:110.5px;font-size:11px;color:#BBBBBB;font-weight:400;letter-spacing:-0.33px;transform-origin:0 0;transform:rotate(-90deg);"><u>1</u>: Project</div>
<svg style="position:absolute;left:5px;top:117px" width="10" height="9" viewBox="0 0 14 11">
<path d="M0 0 H5 L7 2 H14 V11 H0 Z" fill="#AFB1B3"/></svg>
<div class="t" style="left:3px;top:852px;font-size:11px;color:#BBBBBB;font-weight:400;letter-spacing:0.013px;transform-origin:0 0;transform:rotate(-90deg);"><u>7</u>: Structure</div>
<svg style="position:absolute;left:6px;top:858px" width="9" height="9" viewBox="0 0 9 9"><g fill="#AFB1B3"><rect x="5" y="0" width="4" height="4"/><rect x="0" y="5" width="4" height="4"/><rect x="5" y="5" width="4" height="4"/></g></svg>
<div class="t" style="left:3px;top:947.5px;font-size:11px;color:#BBBBBB;font-weight:400;letter-spacing:-0.224px;transform-origin:0 0;transform:rotate(-90deg);"><u>2</u>: Favorites</div>
<svg style="position:absolute;left:4px;top:952px" width="13" height="13" viewBox="0 0 13 13"><path d="M6.5 0.5 L8.3 4.6 L12.6 4.9 L9.3 7.8 L10.3 12.3 L6.5 9.9 L2.7 12.3 L3.7 7.8 L0.4 4.9 L4.7 4.6 Z" fill="#AFB1B3"/></svg>
<div style="position:absolute;left:0px;top:977px;width:1531px;height:1px;background:#4A4A4A;"></div>
<div style="position:absolute;left:0px;top:978px;width:1531px;height:26px;background:#3C3F41;"></div>
<div style="position:absolute;left:20px;top:978px;width:70px;height:21px;background:#2D2F30;"></div>
<div style="position:absolute;left:0px;top:999px;width:1531px;height:1px;background:#4A4A4A;"></div>
<svg style="position:absolute;left:31px;top:984px" width="14" height="13" viewBox="0 0 14 13"><path d="M1 0 L9 5 L1 10 Z" fill="#AFB1B3"/><circle cx="10" cy="10.3" r="2.2" fill="#22C722"/></svg>
<div class="t" style="left:47px;top:982.0px;font-size:12px;color:#FFFFFF;font-weight:400;letter-spacing:-0.472px;"><u>4</u>: Run</div>
<svg style="position:absolute;left:103px;top:985px" width="10" height="9" viewBox="0 0 11 10"><g fill="#AFB1B3"><rect x="0" y="0" width="2" height="2"/><rect x="3" y="0" width="8" height="2"/><rect x="0" y="4" width="2" height="2"/><rect x="3" y="4" width="8" height="2"/><rect x="0" y="8" width="2" height="2"/><rect x="3" y="8" width="8" height="2"/></g></svg>
<div class="t" style="left:118px;top:982.0px;font-size:12px;color:#BBBBBB;font-weight:400;letter-spacing:-0.93px;"><u>6</u>: TODO</div>
<svg style="position:absolute;left:183px;top:984px" width="11" height="10" viewBox="0 0 11 10"><rect x="0" y="0" width="11" height="10" fill="#AFB1B3"/><path d="M2 2 L4.5 4 L2 6" fill="none" stroke="#3C3F41" stroke-width="1.3"/><rect x="5" y="6.6" width="3.5" height="1.3" fill="#3C3F41"/></svg>
<div class="t" style="left:199px;top:982.0px;font-size:12px;color:#BBBBBB;font-weight:400;letter-spacing:-0.48px;">Terminal</div>
<svg style="position:absolute;left:265px;top:984px" width="12" height="12" viewBox="0 0 16 16"><g fill="#AFB1B3">
<path d="M7.5 0.5 c-2.5 0-3.7.9-3.7 2.4 v1.6 h3.9 v.6 H2.3 C.9 5.1 0 6.3 0 8.3 c0 2 .9 3.2 2.3 3.2 h1.3 V9.7 c0-1.4 1.1-2.4 2.5-2.4 h3.6 c1.2 0 2.1-.9 2.1-2.1 V2.9 C11.8 1.4 10.3.5 7.5.5 z"/>
<path d="M8.5 15.3 c2.5 0 3.7-.9 3.7-2.4 v-1.6 H8.3 v-.6 h5.4 c1.4 0 2.3-1.2 2.3-3.2 s-.9-3.2-2.3-3.2 h-1.3 v1.8 c0 1.4-1.1 2.4-2.5 2.4 H6.3 c-1.2 0-2.1.9-2.1 2.1 v2.3 c0 1.5 1.5 2.4 4.3 2.4 z"/></g></svg>
<div class="t" style="left:281px;top:982.0px;font-size:12px;color:#BBBBBB;font-weight:400;letter-spacing:-0.287px;">Python Console</div>
</body></html>
